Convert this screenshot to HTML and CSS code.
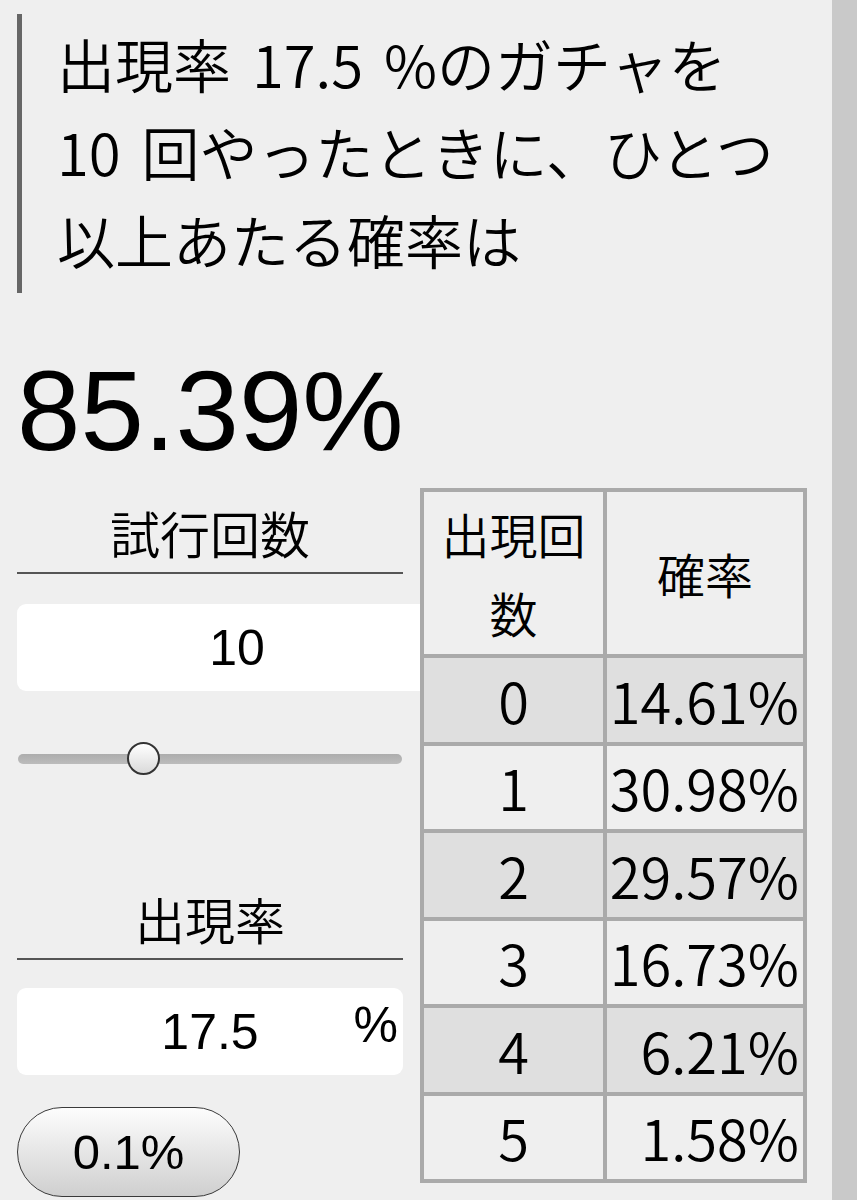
FILE: index.html
```html
<!DOCTYPE html>
<html lang="ja">
<head>
	<meta charset="UTF-8">
	<title>ガチャ確率計算</title>
	<link rel="stylesheet" href="styles.css">
</head>
<body>
	<div class="page">
		<blockquote class="question">出現率 17.5 %のガチャを 10 回やったときに、ひとつ以上あたる確率は</blockquote>
		<p class="answer">85.39%</p>

		<div class="calc">
			<div class="controls">
				<div class="label">試行回数</div>
				<input class="num num-wide" type="text" value="10">
				<input class="slider" type="range" min="1" max="30" value="10">

				<div class="label label-rate">出現率</div>
				<div class="rate-box">
					<input class="num" type="text" value="17.5">
					<span class="unit">%</span>
				</div>
				<button class="step">0.1%</button>
			</div>

			<table class="dist">
				<tr>
					<th class="c1">出現回数</th>
					<th class="c2">確率</th>
				</tr>
				<tr class="dark"><td class="c1">0</td><td class="c2">14.61%</td></tr>
				<tr><td class="c1">1</td><td class="c2">30.98%</td></tr>
				<tr class="dark"><td class="c1">2</td><td class="c2">29.57%</td></tr>
				<tr><td class="c1">3</td><td class="c2">16.73%</td></tr>
				<tr class="dark"><td class="c1">4</td><td class="c2">6.21%</td></tr>
				<tr><td class="c1">5</td><td class="c2">1.58%</td></tr>
			</table>
		</div>
	</div>
</body>
</html>
```

FILE: styles.css
```css
html {
	background: #c9c9c9;
}

body {
	margin: 0;
	font-family: "Noto Sans CJK JP", sans-serif;
	font-weight: 350;
	color: #000;
}

.page {
	width: 832px;
	min-height: 1200px;
	background: #efefef;
	overflow: hidden;
}

.question {
	margin: 14px 47px 0 17px;
	border-left: 5px solid #666;
	padding: 5px 0 10px 35px;
	font-size: 58px;
	line-height: 88px;
	word-spacing: 8px;
}

.answer {
	margin: 62px 0 0 17px;
	font: 114px/112px "Liberation Sans", sans-serif;
}

.calc {
	display: flex;
	align-items: flex-start;
	gap: 17px;
	margin: 21px 0 0 17px;
}

.controls {
	flex: none;
	width: 386px;
}

.label {
	font-size: 50px;
	line-height: 60px;
	text-align: center;
	padding: 14px 0 10px;
	border-bottom: 2px solid #555;
}

.label-rate {
	margin-top: 99px;
}

.num {
	display: block;
	box-sizing: border-box;
	width: 100%;
	height: 87px;
	margin: 30px 0 0;
	padding: 0;
	border: 0;
	border-radius: 9px;
	background: #fff;
	color: #000;
	font: 50px "Liberation Sans", sans-serif;
	text-align: center;
	outline: none;
}

.num-wide {
	width: 440px;
}

.slider {
	-webkit-appearance: none;
	appearance: none;
	display: block;
	width: 384px;
	height: 33px;
	margin: 51px 0 0 1px;
	padding: 0;
	background: transparent;
}

.slider::-webkit-slider-runnable-track {
	height: 10px;
	border-radius: 5px;
	background: linear-gradient(#adadad, #bcbcbc);
}

.slider::-webkit-slider-thumb {
	-webkit-appearance: none;
	box-sizing: border-box;
	width: 33px;
	height: 33px;
	margin-top: -11.5px;
	border: 2px solid #333;
	border-radius: 50%;
	background: linear-gradient(#fff, #dadada);
}

.rate-box {
	position: relative;
	margin-top: 28px;
}

.rate-box .num {
	margin-top: 0;
}

.unit {
	position: absolute;
	right: 5px;
	top: 12px;
	font: 50px/50px "Liberation Sans", sans-serif;
}

.step {
	display: block;
	width: 223px;
	height: 90px;
	margin-top: 32px;
	padding: 0;
	border: 1.5px solid #3a3a3a;
	border-radius: 45px;
	background: linear-gradient(#fdfdfd, #cfcfcf);
	color: #000;
	font: 49px "Liberation Sans", sans-serif;
}

.dist {
	position: relative;
	border-collapse: separate;
	border-spacing: 0;
	border: 2px solid #aaa;
	background: #efefef;
}

.dist th,
.dist td {
	border: 2px solid #aaa;
	padding: 0;
}

.dist th {
	height: 162px;
	font-size: 48px;
	font-weight: 350;
	line-height: 79px;
}

.dist td {
	height: 83.5px;
	font-size: 56px;
	line-height: 1;
}

.dist .c1 {
	width: 179px;
	text-align: center;
}

.dist .c2 {
	width: 196px;
}

.dist td.c2 {
	width: 192px;
	text-align: right;
	padding-right: 4px;
}

.dist .dark td {
	background: #dfdfdf;
}
```
